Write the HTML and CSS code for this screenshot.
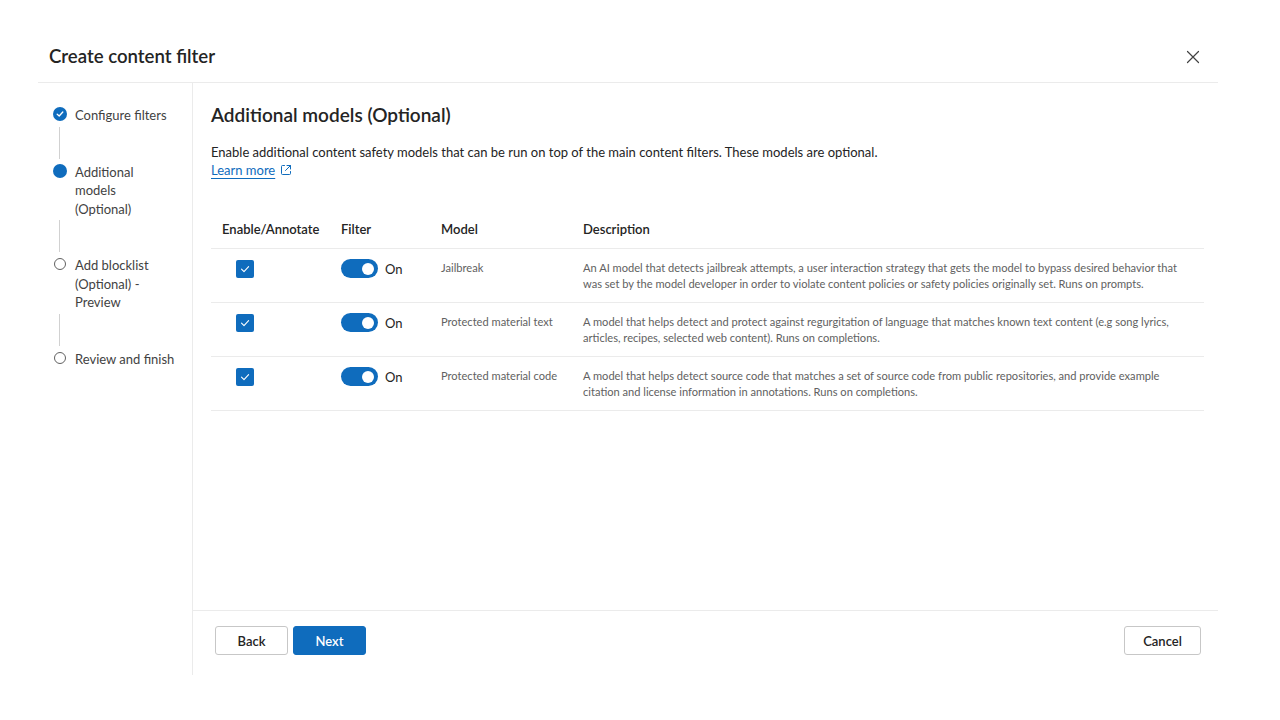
FILE: index.html
```html
<!DOCTYPE html>
<html lang="en">
<head>
<meta charset="utf-8">
<title>Create content filter</title>
<link rel="stylesheet" href="styles.css">
</head>
<body>
<div class="dialog">
  <header class="dlg-header">
    <h1 class="dlg-title">Create content filter</h1>
    <button class="close-btn" aria-label="Close">
      <svg width="14" height="14" viewBox="0 0 14 14"><path d="M1.5 1.5 L12.5 12.5 M12.5 1.5 L1.5 12.5" stroke="#424242" stroke-width="1.2" fill="none" stroke-linecap="round"/></svg>
    </button>
  </header>
  <div class="dlg-body">
    <nav class="stepper">
      <div class="step">
        <span class="dot dot-done">
          <svg width="8" height="8" viewBox="0 0 8 8"><path d="M1.2 4.2 L3.2 6 L6.8 2" stroke="#fff" stroke-width="1.3" fill="none" stroke-linecap="round" stroke-linejoin="round"/></svg>
        </span>
        <span class="step-label">Configure filters</span>
      </div>
      <div class="connector"></div>
      <div class="step">
        <span class="dot dot-current"></span>
        <span class="step-label">Additional<br>models<br>(Optional)</span>
      </div>
      <div class="connector"></div>
      <div class="step">
        <span class="dot dot-todo"></span>
        <span class="step-label">Add blocklist<br>(Optional) -<br>Preview</span>
      </div>
      <div class="connector"></div>
      <div class="step">
        <span class="dot dot-todo"></span>
        <span class="step-label">Review and finish</span>
      </div>
    </nav>
    <div class="main">
      <div class="content">
        <h2 class="section-title">Additional models (Optional)</h2>
        <p class="intro">Enable additional content safety models that can be run on top of the main content filters. These models are optional.</p>
        <a class="learn-more" href="#">Learn more</a><svg class="ext" width="12" height="12" viewBox="0 0 12 12"><path d="M4.5 1.5 H2.5 A1 1 0 0 0 1.5 2.5 V9.5 A1 1 0 0 0 2.5 10.5 H9.5 A1 1 0 0 0 10.5 9.5 V7.5 M7 1.5 H10.5 V5 M10.5 1.5 L5.5 6.5" stroke="#0f6cbd" stroke-width="1" fill="none" stroke-linecap="round" stroke-linejoin="round"/></svg>
        <table class="models">
          <thead>
            <tr>
              <th class="c1">Enable/Annotate</th>
              <th class="c2">Filter</th>
              <th class="c3">Model</th>
              <th class="c4">Description</th>
            </tr>
          </thead>
          <tbody>
            <tr>
              <td class="c1"><span class="checkbox"><svg width="12" height="12" viewBox="0 0 12 12"><path d="M2.5 6.2 L5 8.6 L9.6 3.6" stroke="#fff" stroke-width="1.1" fill="none" stroke-linecap="round" stroke-linejoin="round"/></svg></span></td>
              <td class="c2"><span class="switch"><span class="thumb"></span></span><span class="on">On</span></td>
              <td class="c3 small">Jailbreak</td>
              <td class="c4 small">An AI model that detects jailbreak attempts, a user interaction strategy that gets the model to bypass desired behavior that was set by the model developer in order to violate content policies or safety policies originally set. Runs on prompts.</td>
            </tr>
            <tr>
              <td class="c1"><span class="checkbox"><svg width="12" height="12" viewBox="0 0 12 12"><path d="M2.5 6.2 L5 8.6 L9.6 3.6" stroke="#fff" stroke-width="1.1" fill="none" stroke-linecap="round" stroke-linejoin="round"/></svg></span></td>
              <td class="c2"><span class="switch"><span class="thumb"></span></span><span class="on">On</span></td>
              <td class="c3 small">Protected material text</td>
              <td class="c4 small">A model that helps detect and protect against regurgitation of language that matches known text content (e.g song lyrics, articles, recipes, selected web content). Runs on completions.</td>
            </tr>
            <tr>
              <td class="c1"><span class="checkbox"><svg width="12" height="12" viewBox="0 0 12 12"><path d="M2.5 6.2 L5 8.6 L9.6 3.6" stroke="#fff" stroke-width="1.1" fill="none" stroke-linecap="round" stroke-linejoin="round"/></svg></span></td>
              <td class="c2"><span class="switch"><span class="thumb"></span></span><span class="on">On</span></td>
              <td class="c3 small">Protected material code</td>
              <td class="c4 small">A model that helps detect source code that matches a set of source code from public repositories, and provide example citation and license information in annotations. Runs on completions.</td>
            </tr>
          </tbody>
        </table>
      </div>
      <footer class="dlg-footer">
        <div class="left-btns">
          <button class="btn">Back</button>
          <button class="btn btn-primary">Next</button>
        </div>
        <button class="btn btn-cancel">Cancel</button>
      </footer>
    </div>
  </div>
</div>
</body>
</html>
```
FILE: styles.css
```css
* { box-sizing: border-box; }
html, body { margin: 0; padding: 0; background: #fff; }
body {
  font-family: Lato, "Noto Sans", sans-serif;
  color: #242424;
  font-size: 13px;
}
.dialog {
  margin: 32px 62px 0 38px;
  width: 1180px;
}
.dlg-header {
  height: 51px;
  border-bottom: 1px solid #ebebeb;
  display: flex;
  align-items: center;
  justify-content: space-between;
  padding: 0 18px 0 11px;
}
.dlg-title {
  margin: 0;
  font-size: 18.6px;
  font-weight: 600;
  line-height: 28px;
  margin-top: -3px;
}
.close-btn {
  border: 0;
  background: none;
  padding: 0;
  width: 14px;
  height: 14px;
  display: flex;
  margin-top: -1px;
}
.dlg-body {
  display: flex;
  height: 592px;
}
.stepper {
  width: 155px;
  flex: none;
  border-right: 1px solid #ebebeb;
  padding: 23px 0 0 15px;
}
.step {
  display: flex;
  align-items: flex-start;
  gap: 8px;
}
.step-label {
  font-size: 13px;
  line-height: 18.5px;
  color: #424242;
}
.dot {
  flex: none;
  width: 14px;
  height: 14px;
  border-radius: 50%;
  margin-top: 1px;
  display: flex;
  align-items: center;
  justify-content: center;
}
.dot-done, .dot-current { background: #0f6cbd; }
.dot-todo {
  width: 12px;
  height: 12px;
  margin: 2px 1px 0 1px;
  border: 1px solid #616161;
}
.connector {
  width: 1px;
  height: 32px;
  background: #d1d1d1;
  margin: 2px 0 4px 6px;
}
.main {
  flex: 1;
  display: flex;
  flex-direction: column;
}
.content {
  flex: 1;
  padding: 19px 14px 0 18px;
}
.section-title {
  margin: 0;
  font-size: 19px;
  font-weight: 600;
  line-height: 26px;
}
.intro {
  margin: 15px 0 0 0;
  font-size: 13px;
  line-height: 18px;
}
.learn-more {
  color: #0f6cbd;
  font-size: 13px;
  line-height: 18px;
  text-decoration: underline;
  text-underline-offset: 3px;
}
.ext { margin-left: 5px; vertical-align: -1px; }
.models {
  margin-top: 32px;
  width: 100%;
  border-collapse: collapse;
  table-layout: fixed;
}
.models th {
  text-align: left;
  font-weight: 600;
  font-size: 13px;
  line-height: 18px;
  padding: 9px 11px 10px 11px;
  border-bottom: 1px solid #ebebeb;
}
.models td {
  vertical-align: top;
  padding: 10px 11px 10px 11px;
  border-bottom: 1px solid #ebebeb;
  height: 54px;
}
.c1 { width: 119px; }
.c2 { width: 100px; }
.c3 { width: 142px; }
.models td.c1 { padding-left: 25px; }
.small {
  font-size: 11.1px;
  line-height: 16px;
  color: #616161;
}
.models td.c3 { padding-top: 11px; }
.models td.c4 { padding-top: 11px; }
.checkbox {
  display: flex;
  align-items: center;
  justify-content: center;
  width: 18px;
  height: 18px;
  border-radius: 2px;
  background: #0f6cbd;
  margin-top: 1px;
}
.models td.c2 { white-space: nowrap; }
.switch {
  display: inline-flex;
  align-items: center;
  justify-content: flex-end;
  width: 37px;
  height: 19px;
  border-radius: 10px;
  background: #0f6cbd;
  padding-right: 4px;
  vertical-align: middle;
}
.thumb {
  width: 12px;
  height: 12px;
  border-radius: 50%;
  background: #fff;
}
.on {
  margin-left: 7px;
  font-size: 13px;
  vertical-align: middle;
  color: #242424;
}
.dlg-footer {
  height: 65px;
  border-top: 1px solid #ebebeb;
  display: flex;
  justify-content: space-between;
  align-items: flex-start;
  padding: 15px 17px 0 22px;
}
.left-btns { display: flex; gap: 5px; }
.btn {
  font-family: inherit;
  font-size: 13px;
  font-weight: 600;
  height: 29px;
  padding: 0 15px;
  min-width: 73px;
  background: #fff;
  color: #242424;
  border: 1px solid #c7c7c7;
  border-radius: 3px;
}
.btn-cancel { min-width: 77px; }
.btn-primary {
  background: #0f6cbd;
  border-color: #0f6cbd;
  color: #fff;
}
```
